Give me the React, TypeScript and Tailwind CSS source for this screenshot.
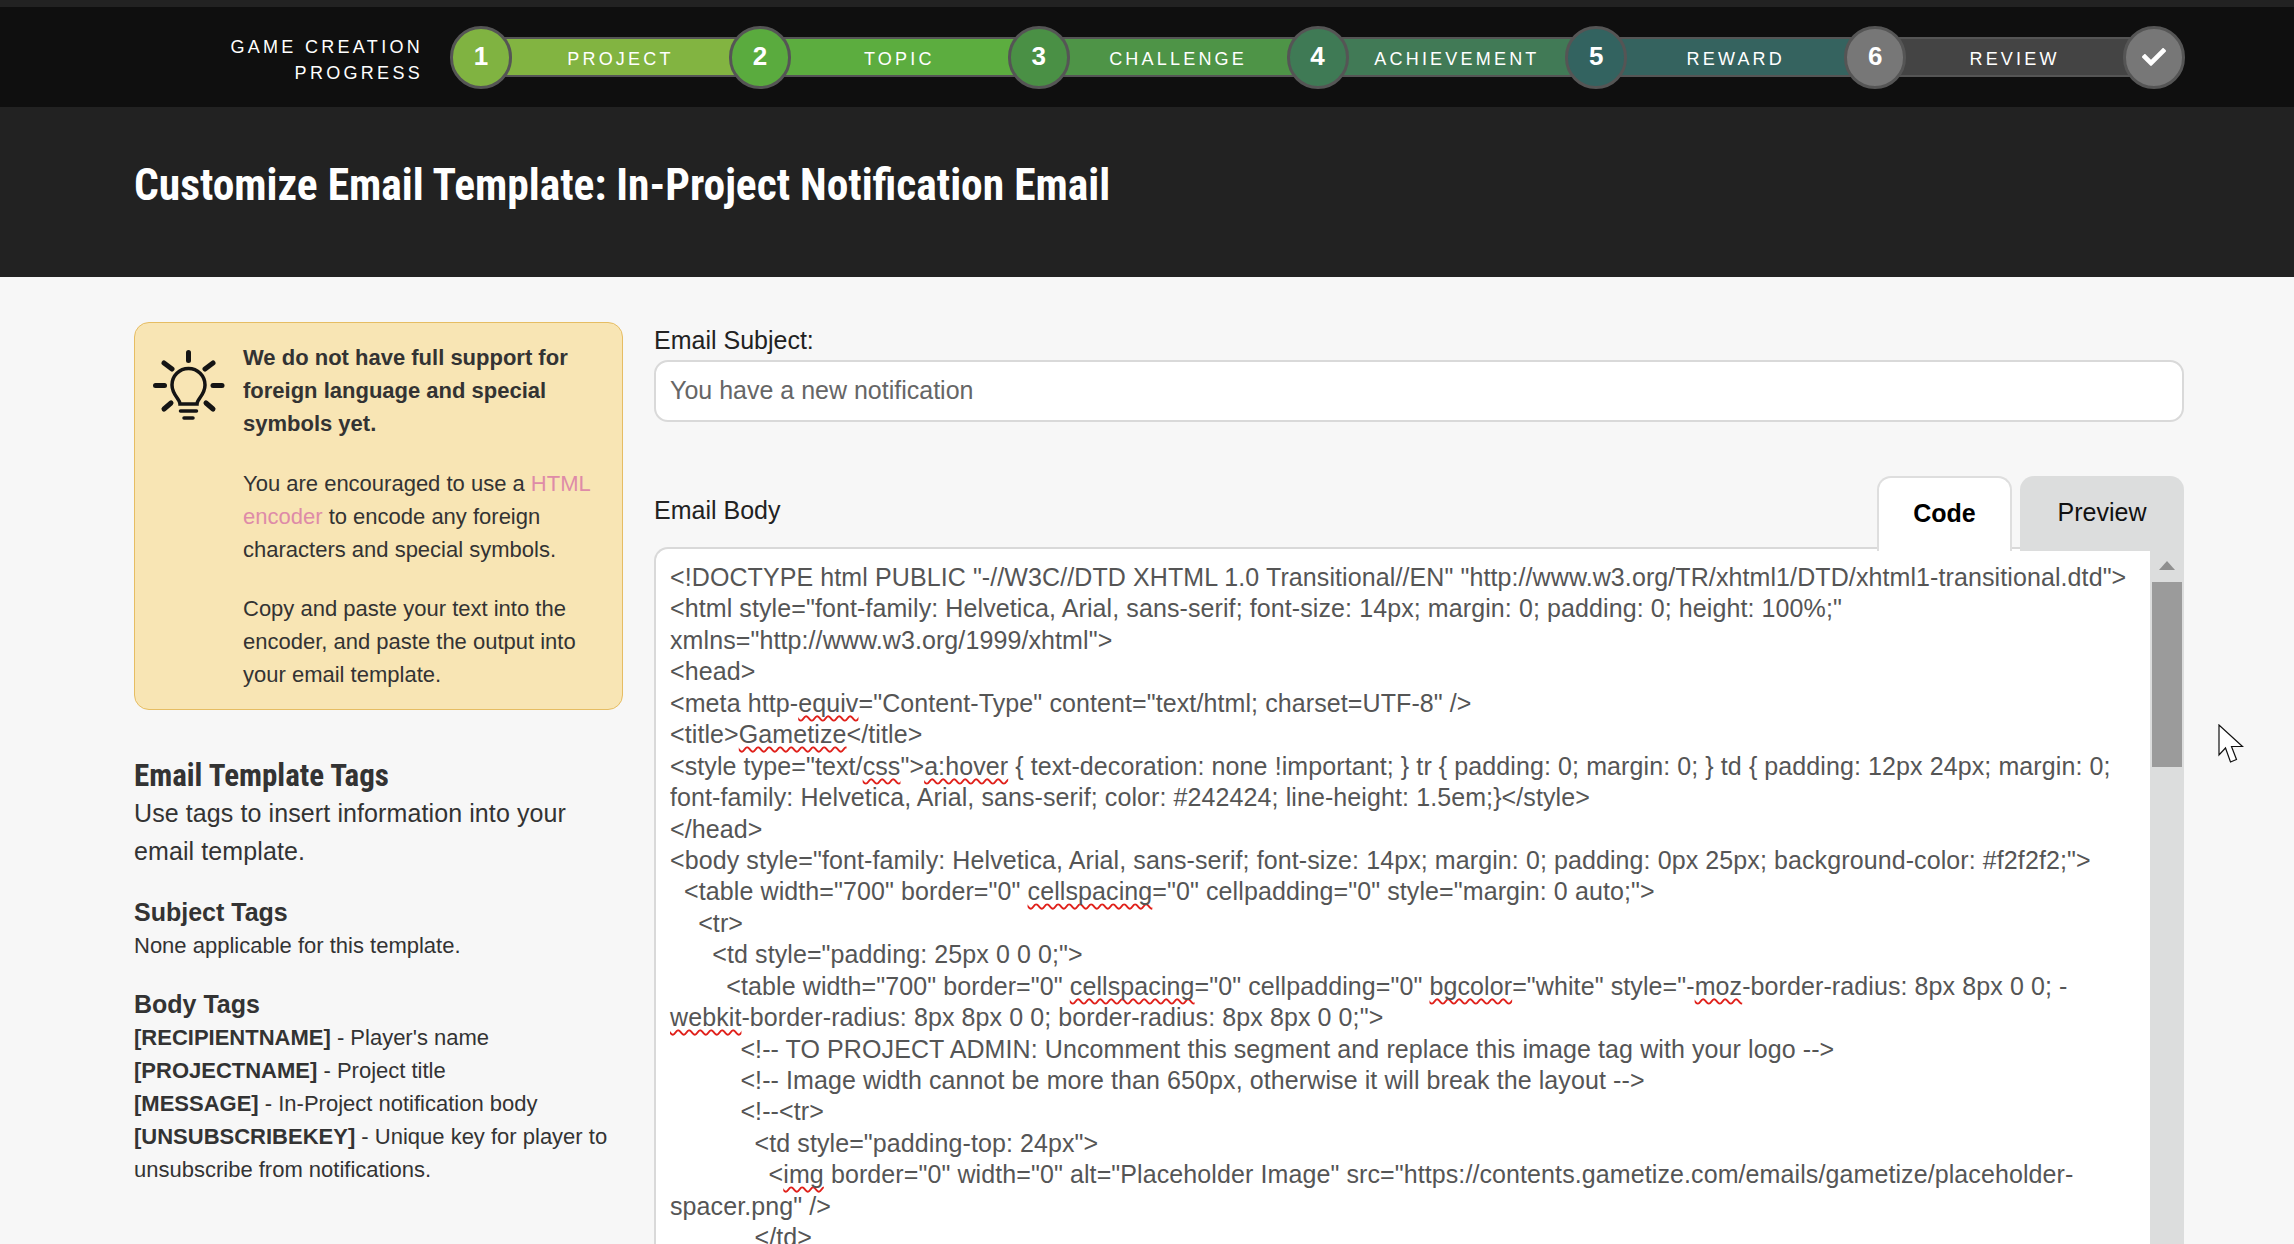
import { FaCheck } from "react-icons/fa";

const steps = [
  { num: "1", label: "PROJECT", circle: "bg-[#80b341]", bar: "bg-[#82b441]" },
  { num: "2", label: "TOPIC", circle: "bg-[#5aab3e]", bar: "bg-[#5cad3f]" },
  { num: "3", label: "CHALLENGE", circle: "bg-[#4a9045]", bar: "bg-[#4e9447]" },
  { num: "4", label: "ACHIEVEMENT", circle: "bg-[#3f7a55]", bar: "bg-[#417a56]" },
  { num: "5", label: "REWARD", circle: "bg-[#336360]", bar: "bg-[#35635f]" },
  { num: "6", label: "REVIEW", circle: "bg-[#777777]", bar: "bg-[#444444]" },
];

function Sq({ children }: { children: string }) {
  return <span className="underline decoration-wavy decoration-[#e0201a] decoration-[1.500px] underline-offset-[3px] [text-decoration-skip-ink:none]">{children}</span>;
}

function Bulb() {
  return (
    <svg viewBox="0 0 72 72" className="w-[72px] h-[72px] shrink-0" fill="none" stroke="#141414" strokeLinecap="round">
      <g strokeWidth="5">
        <path d="M35.500 2.500v8" />
        <path d="M11 13l8 6" />
        <path d="M60 13l-8 6" />
        <path d="M2.500 35.500h9" />
        <path d="M60 35.500h9" />
        <path d="M11 59l7-6" />
        <path d="M60 59l-7-6" />
      </g>
      <path strokeWidth="3.500" d="M27 54c0-5-8-9-8-19a16.500 16.500 0 1 1 33 0c0 10-8 14-8 19z" />
      <path strokeWidth="3.500" d="M27.500 61h16M31 68h9" />
    </svg>
  );
}

function Cursor() {
  return (
    <svg viewBox="0 0 26 40" className="absolute left-[2218px] top-[724px] w-[26px] h-[40px]" fill="#fff" stroke="#111" strokeWidth="1.200">
      <path d="M1 1v30l6.500-7 5 14 6-2.500-5-13h11z" />
    </svg>
  );
}

export default function App() {
  return (
    <div className="relative h-screen overflow-hidden bg-[#f7f7f7] font-['Liberation_Sans',Arial,sans-serif] text-[#333]">
      <div className="h-[7px] bg-[#222]" />

      {/* Progress */}
      <div className="h-[100px] bg-[#0f0f0f] flex items-center justify-end pr-[109px] text-white">
        <div className="text-right text-[18px] leading-[26px] tracking-[3.300px] mr-[27px] pt-[6px]">
          GAME CREATION<br />PROGRESS
        </div>
        {steps.map((step) => (
          <div key={step.num} className="flex items-center">
            <div className={`z-10 w-[62px] h-[63px] rounded-full border-[3px] border-[#555] flex items-center justify-center text-[26px] font-bold pb-[2px] ${step.circle}`}>
              {step.num}
            </div>
            <div className={`w-[232.830px] -mx-[8px] h-[40px] border-y-2 border-[#555] flex items-center justify-center text-[18px] tracking-[3.200px] pt-[5px] ${step.bar}`}>
              {step.label}
            </div>
          </div>
        ))}
        <div className="z-10 w-[62px] h-[63px] rounded-full border-[3px] border-[#555] bg-[#777] flex items-center justify-center">
          <FaCheck className="w-[24px] h-[24px] text-white" />
        </div>
      </div>

      <div className="h-[170px] bg-[#222] flex items-center px-[134px] pb-[12px]">
        <h1 className="font-['Roboto',sans-serif] font-bold text-[43.500px] text-white [font-stretch:75%] whitespace-nowrap">
          Customize Email Template: In-Project Notification Email
        </h1>
      </div>

      <div className="flex pl-[134px] pr-[110px] pt-[45px] gap-[31px]">
        {/* Sidebar */}
        <div className="w-[489px] shrink-0">
          <div className="flex gap-[18px] rounded-[15px] border border-[#e6bd63] bg-[#f8e5b4] pl-[18px] pr-[18px] py-[18px] text-[22px] leading-[33px]">
            <div className="pt-[9px]"><Bulb /></div>
            <div>
              <p className="font-bold mb-[26.500px]">We do not have full support for foreign language and special symbols yet.</p>
              <p className="mb-[26.500px]">
                You are encouraged to use a <span className="text-[#de8ba8]">HTML encoder</span> to encode any foreign characters and special symbols.
              </p>
              <p>Copy and paste your text into the encoder, and paste the output into your email template.</p>
            </div>
          </div>

          <h2 className="mt-[44px] font-['Roboto',sans-serif] font-bold text-[31px] leading-[44px] [font-stretch:75%] whitespace-nowrap">Email Template Tags</h2>
          <p className="text-[25px] tracking-[0.100px] leading-[38px] mt-[-4px]">Use tags to insert information into your email template.</p>

          <h3 className="mt-[24px] text-[25px] leading-[36px] font-bold">Subject Tags</h3>
          <p className="text-[22px] leading-[33px] -mt-[1px]">None applicable for this template.</p>

          <h3 className="mt-[25px] text-[25px] leading-[34px] font-bold">Body Tags</h3>
          <div className="text-[22px] leading-[33px]">
            <p><b>[RECIPIENTNAME]</b> - Player's name</p>
            <p><b>[PROJECTNAME]</b> - Project title</p>
            <p><b>[MESSAGE]</b> - In-Project notification body</p>
            <p><b>[UNSUBSCRIBEKEY]</b> - Unique key for player to unsubscribe from notifications.</p>
          </div>
        </div>

        {/* Editor */}
        <div className="flex-1 min-w-0">
          <label className="block text-[25px] leading-[36px] text-[#222] mb-[2px]">Email Subject:</label>
          <div className="h-[62px] rounded-[14px] border-2 border-[#d9d9d9] bg-white flex items-center px-[14px] text-[25px] text-[#666]">
            You have a new notification
          </div>

          <div className="flex items-end justify-between mt-[54px] h-[75px]">
            <span className="text-[25px] leading-[38px] text-[#222] mb-[22px]">Email Body</span>
            <div className="flex gap-[8px] relative z-10">
              <div className="w-[135px] h-[75px] rounded-t-[14px] border-2 border-b-0 border-[#dedede] bg-white flex items-center justify-center text-[25px] font-bold text-black pb-[2px]">Code</div>
              <div className="w-[164px] h-[75px] rounded-t-[14px] bg-[#dcdddd] flex items-center justify-center text-[25px] text-[#111] pb-[2px]">Preview</div>
            </div>
          </div>

          <div className="flex h-[700px] -mt-[4px] rounded-tl-[14px] border-2 border-b-0 border-r-0 border-[#d9d9d9] bg-white overflow-hidden">
            <pre className="flex-1 min-w-0 font-['Liberation_Sans',Arial,sans-serif] text-[25px] tracking-[0.096px] leading-[31.430px] text-[#555] pl-[14px] pt-[13px] whitespace-pre">
              <div>{`<!DOCTYPE html PUBLIC "-//W3C//DTD XHTML 1.0 Transitional//EN" "http://www.w3.org/TR/xhtml1/DTD/xhtml1-transitional.dtd">`}</div>
              <div>{`<html style="font-family: Helvetica, Arial, sans-serif; font-size: 14px; margin: 0; padding: 0; height: 100%;"`}</div>
              <div>{`xmlns="http://www.w3.org/1999/xhtml">`}</div>
              <div>{`<head>`}</div>
              <div>{`<meta http-`}<Sq>equiv</Sq>{`="Content-Type" content="text/html; charset=UTF-8" />`}</div>
              <div>{`<title>`}<Sq>Gametize</Sq>{`</title>`}</div>
              <div>{`<style type="text/`}<Sq>css</Sq>{`">`}<Sq>a:hover</Sq>{` { text-decoration: none !important; } tr { padding: 0; margin: 0; } td { padding: 12px 24px; margin: 0;`}</div>
              <div>{`font-family: Helvetica, Arial, sans-serif; color: #242424; line-height: 1.5em;}</style>`}</div>
              <div>{`</head>`}</div>
              <div>{`<body style="font-family: Helvetica, Arial, sans-serif; font-size: 14px; margin: 0; padding: 0px 25px; background-color: #f2f2f2;">`}</div>
              <div>{`  <table width="700" border="0" `}<Sq>cellspacing</Sq>{`="0" cellpadding="0" style="margin: 0 auto;">`}</div>
              <div>{`    <tr>`}</div>
              <div>{`      <td style="padding: 25px 0 0 0;">`}</div>
              <div>{`        <table width="700" border="0" `}<Sq>cellspacing</Sq>{`="0" cellpadding="0" `}<Sq>bgcolor</Sq>{`="white" style="-`}<Sq>moz</Sq>{`-border-radius: 8px 8px 0 0; -`}</div>
              <div><Sq>webkit</Sq>{`-border-radius: 8px 8px 0 0; border-radius: 8px 8px 0 0;">`}</div>
              <div>{`          <!-- TO PROJECT ADMIN: Uncomment this segment and replace this image tag with your logo -->`}</div>
              <div>{`          <!-- Image width cannot be more than 650px, otherwise it will break the layout -->`}</div>
              <div>{`          <!--<tr>`}</div>
              <div>{`            <td style="padding-top: 24px">`}</div>
              <div>{`              <`}<Sq>img</Sq>{` border="0" width="0" alt="Placeholder Image" src="https://contents.gametize.com/emails/gametize/placeholder-`}</div>
              <div>{`spacer.png" />`}</div>
              <div>{`            </td>`}</div>
            </pre>
            <div className="w-[34px] shrink-0 bg-[#dcdddd] pl-[2px] pr-[2px]">
              <div className="h-[33px] flex items-center justify-center">
                <div className="w-0 h-0 border-x-[8px] border-x-transparent border-b-[9px] border-b-[#8f8f8f]" />
              </div>
              <div className="h-[185px] bg-[#9b9b9b]" />
            </div>
          </div>
        </div>
      </div>

      <Cursor />
    </div>
  );
}
